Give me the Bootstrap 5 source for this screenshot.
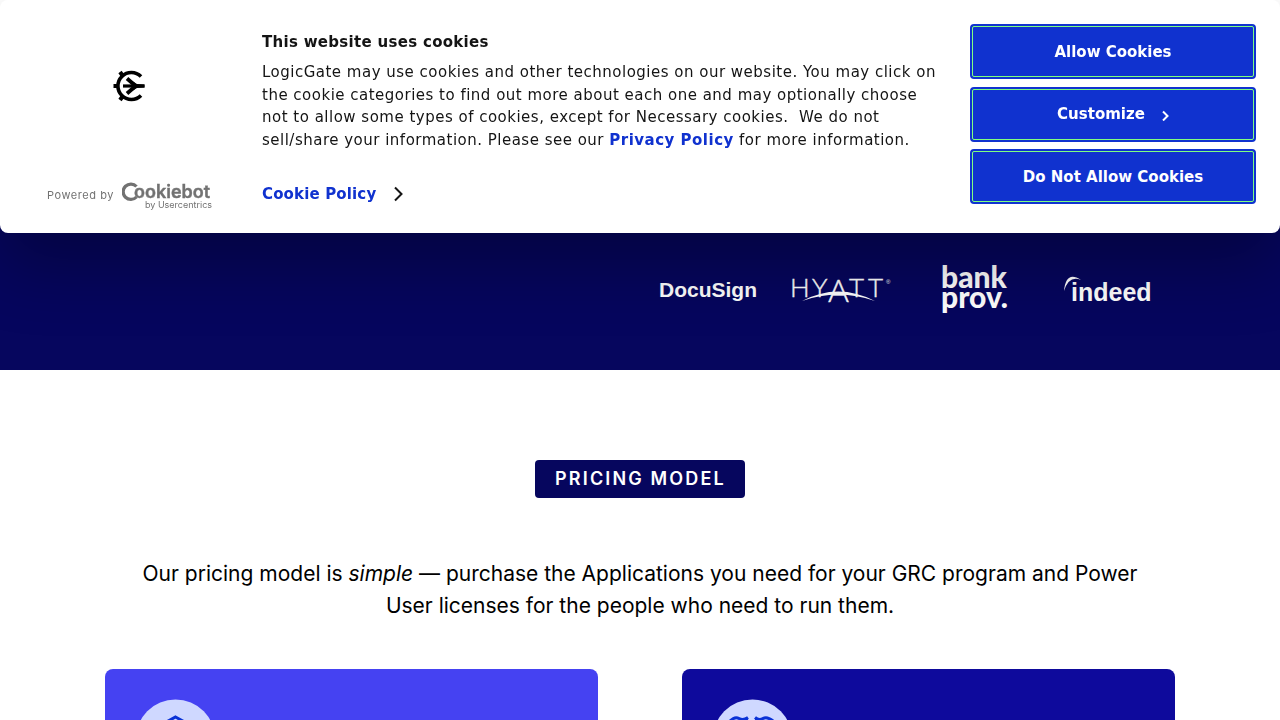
<!DOCTYPE html>
<html lang="en">
<head>
<meta charset="utf-8">
<meta name="viewport" content="width=device-width, initial-scale=1">
<title>LogicGate Pricing</title>
<link href="https://cdn.jsdelivr.net/npm/bootstrap@5.3.0/dist/css/bootstrap.min.css" rel="stylesheet">
<style>
body { font-family: Inter, "Liberation Sans", sans-serif; color: #000; background: #fff; overflow-x: hidden; }
svg { display: block; }
/* Cookie dialog */
.consent { font-family: "DejaVu Sans", sans-serif; font-size: 15px; line-height: 1.5; color: #141414; background: #fff; border-radius: 8px; box-shadow: 0 32px 68px rgba(0,0,0,.3); z-index: 1050; padding: 24px; }
.consent-brand { width: 238px; padding: 44px 24px 0 23px; }
.consent-mark { margin-left: 63px; }
.consent-powered { font: 400 11px/16px Inter, sans-serif; color: #727272; padding-top: 1px; margin-bottom: -1px; }
.consent-powered span { letter-spacing: .05em; }
.consent-title { font-size: 15px; line-height: 24px; font-weight: 700; letter-spacing: .02em; margin: 6px 0 7px; }
.consent-copy { letter-spacing: .033em; }
.consent-info { padding-bottom: 3px; }
.consent a { color: #1032cf; font-weight: 700; text-decoration: none; }
.consent-more { letter-spacing: .01em; }
.consent-actions { width: 286px; height: 180px; }
.consent-btn { font-size: 15px; font-weight: 700; color: #fff; background: #1032cf; border: 2px solid #1032cf; border-radius: 4px; outline: 1px solid #80ff80; outline-offset: -3px; height: 55px; padding: 1px 0 0; }
.consent-btn:hover { color: #fff; background: #0c28a8; }
/* Page */
.page-wrap { max-width: 1070px; }
.topbar { height: 80px; background: #fff; }
.hero { background: #06065e; padding: 177px 0 47px; }
.hero-logos { max-width: 500px; }
.hero-logos svg { fill: #fff; overflow: visible; }
.pricing { padding-top: 90px; }
.eyebrow { font-size: 18px; line-height: 26px; font-weight: 600; letter-spacing: .12em; color: #fff; background: #06065e; border-radius: 4px; padding: 6px 19px 6px 20px; }
.intro { font-size: 21px; line-height: 32px; max-width: 1010px; margin: 60px auto 47px; }
.plans { gap: 84px; }
.plan { border-radius: 8px; padding: 30px; }
.plan-apps { background: #4542f2; }
.plan-users { background: #0e0a9c; }
</style>
</head>
<body>
<section class="consent fixed-top d-flex" role="dialog" aria-labelledby="consentTitle">
  <div class="consent-brand d-flex flex-column flex-shrink-0">
    <svg class="consent-mark" width="36" height="36" viewBox="0 0 36 36" fill="none" stroke="#000" aria-label="LogicGate">
      <path d="M31 8.500A13.500 13.500 0 1 0 31 27.500" stroke-width="3.600"/>
      <path d="M3.500 18h5M10 4l2.500 3.500M10 32l2.500-3.500" stroke-width="4"/>
      <path d="M13 18h21.500" stroke-width="3.200"/>
      <path d="M17 10.500l7.500 6.500M17 25.500l7.500-6.500" stroke-width="3.800"/>
      <path d="M22 13l5 3 7.500.4v3.200l-7.500.4-5 3z" fill="#000" stroke="none"/>
    </svg>
    <div class="d-flex align-items-center consent-powered mt-auto">
      <span class="text-nowrap">Powered by</span>
      <svg width="92" height="30" viewBox="0 0 92 30" fill="#727272" class="ms-2 flex-shrink-0" aria-label="Cookiebot by Usercentrics">
        <path d="M14.500 6.500A7.700 7.700 0 1 0 14.500 17" fill="none" stroke="#727272" stroke-width="3.200"/>
        <text x="12" y="18" font-family="Inter, sans-serif" font-weight="600" font-size="18" stroke="#727272" stroke-width=".4">ookiebot</text>
        <text x="23" y="28" font-family="Inter, sans-serif" font-weight="400" font-size="9">by Usercentrics</text>
      </svg>
    </div>
  </div>
  <div class="consent-info flex-grow-1 pe-4 me-2">
    <h2 class="consent-title" id="consentTitle">This website uses cookies</h2>
    <p class="consent-copy mb-4">LogicGate may use cookies and other technologies on our website. You may click on the cookie categories to find out more about each one and may optionally choose not to allow some types of cookies, except for Necessary cookies.&nbsp; We do not sell/share your information. Please see our <a href="#">Privacy Policy</a> for more information.</p>
    <a href="#" class="consent-more d-inline-flex align-items-center gap-3 mt-2">Cookie Policy
      <svg width="12" height="16" viewBox="0 0 12 16" fill="none" stroke="#141414" stroke-width="2" aria-hidden="true"><path d="M3 1.500l6.500 6.500L3 14.500"/></svg>
    </a>
  </div>
  <div class="consent-actions d-flex flex-column justify-content-between flex-shrink-0">
    <button type="button" class="btn consent-btn">Allow Cookies</button>
    <button type="button" class="btn consent-btn d-flex align-items-center justify-content-center gap-3">Customize
      <svg width="8" height="12" viewBox="0 0 8 12" fill="none" stroke="#fff" stroke-width="2" aria-hidden="true"><path d="M2 2.500l4.500 4.500L2 11.500"/></svg>
    </button>
    <button type="button" class="btn consent-btn">Do Not Allow Cookies</button>
  </div>
</section>

<nav class="topbar" aria-label="Main"></nav>
<header class="hero">
  <div class="page-wrap mx-auto pe-4">
    <div class="hero-logos ms-auto d-flex align-items-center justify-content-between">
      <svg width="98" height="66" viewBox="0 0 98 66" aria-label="DocuSign"><text x="8" y="40" font-family="Liberation Sans, sans-serif" font-weight="700" font-size="21">DocuSign</text></svg>
      <svg width="104" height="66" viewBox="3 0 104 66" aria-label="Hyatt">
        <g font-family="Lato, sans-serif" font-size="26" font-weight="300" stroke="#fff" stroke-width=".4"><text x="-2" y="40">H</text><text x="20" y="40">Y</text><text x="36" y="45" font-size="32">A</text><text x="57" y="40">T</text><text x="76" y="40">T</text></g>
        <path d="M10 44Q46 25 83 44Q46 31 10 44z"/>
        <text x="94" y="27" font-family="Liberation Sans, sans-serif" font-size="6">®</text>
      </svg>
      <svg width="68" height="66" viewBox="2 0 68 66" font-family="Lato, sans-serif" font-weight="900" font-size="30" aria-label="bank prov."><text x="-2" y="31">bank</text><text x="-2" y="51">prov.</text></svg>
      <svg width="92" height="66" viewBox="-4 0 92 66" aria-label="indeed"><text x="8" y="44" font-family="Liberation Sans, sans-serif" font-weight="700" font-size="25">indeed</text><path d="M1 34Q3 13 18 23Q6 18 1 34z"/></svg>
    </div>
  </div>
</header>

<main class="pricing">
  <div class="text-center px-3">
    <span class="eyebrow d-inline-block">PRICING MODEL</span>
    <p class="intro">Our pricing model is <em>simple</em> — purchase the Applications you need for your GRC program and Power User licenses for the people who need to run them.</p>
  </div>
  <div class="plans page-wrap mx-auto d-flex">
    <article class="plan plan-apps flex-fill">
      <svg width="81" height="81" viewBox="0 0 81 81" aria-hidden="true"><circle cx="40.500" cy="40.500" r="40" fill="#cfd8ff"/><path d="M40.500 18l18 10v23l-18 11-18-11V28zM22.500 28l18 11 18-11M40.500 39v22" fill="none" stroke="#0a32d6" stroke-width="3"/></svg>
    </article>
    <article class="plan plan-users flex-fill">
      <svg width="81" height="81" viewBox="0 0 81 81" aria-hidden="true"><circle cx="40.500" cy="40.500" r="40" fill="#cfd8ff"/><g fill="none" stroke="#0a32d6" stroke-width="3"><path d="M18 22q5-5 9-2.500t9-1M31 23q2-3 5-2M43 18.500q4 3.500 8 1t10 2.500M43 20q4 0 6 3"/><circle cx="27" cy="34" r="9"/><circle cx="54" cy="34" r="9"/><path d="M14 60q0-14 13-14t13 14M41 60q0-14 13-14t13 14"/></g></svg>
    </article>
  </div>
</main>
<script src="https://cdn.jsdelivr.net/npm/bootstrap@5.3.0/dist/js/bootstrap.bundle.min.js"></script>
</body>
</html>
